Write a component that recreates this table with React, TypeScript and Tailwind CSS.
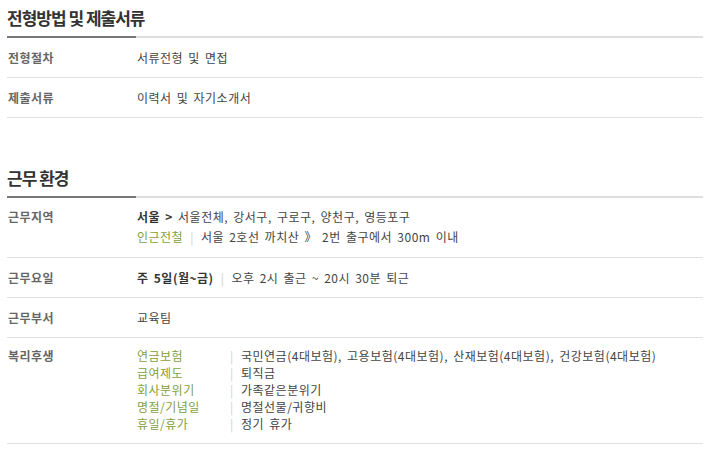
import React from 'react';

const Sep = () => <span className="mx-[7px] text-[#d0d0d0]">|</span>;

const benefits: [string, string][] = [
  ['연금보험', '국민연금(4대보험), 고용보험(4대보험), 산재보험(4대보험), 건강보험(4대보험)'],
  ['급여제도', '퇴직금'],
  ['회사분위기', '가족같은분위기'],
  ['명절/기념일', '명절선물/귀향비'],
  ['휴일/휴가', '정기 휴가'],
];

const SectionTitle = ({ title }: { title: string }) => (
  <div>
    <div className="flex h-[36px] items-center pb-[1px]">
      <h2 className="text-[17px] font-bold tracking-[-1px] text-[#333] [word-spacing:0px]">{title}</h2>
    </div>
    <div className="flex h-[2px]">
      <div className="w-[129px] bg-[#777]" />
      <div className="flex-1 bg-[#ddd]" />
    </div>
  </div>
);

const InfoRow = ({ label, children, className = '' }: { label: string; children: React.ReactNode; className?: string }) => (
  <div className={`flex border-b border-[#e0e0e0] ${className}`}>
    <div className="w-[130px] shrink-0 pl-[1px] font-bold text-[#666]">{label}</div>
    <div className="flex-1 text-[#444]">{children}</div>
  </div>
);

export default function App() {
  return (
    <div
      className="min-h-[451px] bg-white px-[7px] pr-[18px] text-[12px] tracking-[0.5px] [word-spacing:2px]"
      style={{ fontFamily: '"Noto Sans CJK KR", "Noto Sans", sans-serif' }}
    >
      <SectionTitle title="전형방법 및 제출서류" />
      <InfoRow label="전형절차" className="h-[40px] items-center leading-[20px]">
        서류전형 및 면접
      </InfoRow>
      <InfoRow label="제출서류" className="h-[40px] items-center leading-[20px]">
        이력서 및 자기소개서
      </InfoRow>

      <div className="mt-[42px]">
        <SectionTitle title="근무 환경" />
      </div>
      <InfoRow label="근무지역" className="pt-[9px] pb-[10px] leading-[20px]">
        <div>
          <span className="font-bold text-[#333]">서울 &gt;</span> 서울전체, 강서구, 구로구, 양천구, 영등포구
        </div>
        <div>
          <span className="text-[#83a03d]">인근전철</span>
          <Sep />
          서울 2호선 까치산 》 2번 출구에서 300m 이내
        </div>
      </InfoRow>
      <InfoRow label="근무요일" className="h-[40px] items-center leading-[20px]">
        <span className="font-bold text-[#333]">주 5일(월~금)</span>
        <Sep />
        오후 2시 출근 ~ 20시 30분 퇴근
      </InfoRow>
      <InfoRow label="근무부서" className="h-[40px] items-center leading-[20px]">
        교육팀
      </InfoRow>
      <InfoRow label="복리후생" className="pt-[9px] pb-[11px] leading-[17px]">
        {benefits.map(([k, v]) => (
          <div key={k} className="flex">
            <span className="w-[93px] shrink-0 text-[#83a03d]">{k}</span>
            <span className="w-[11px] shrink-0 text-[#d0d0d0]">|</span>
            <span>{v}</span>
          </div>
        ))}
      </InfoRow>
    </div>
  );
}
